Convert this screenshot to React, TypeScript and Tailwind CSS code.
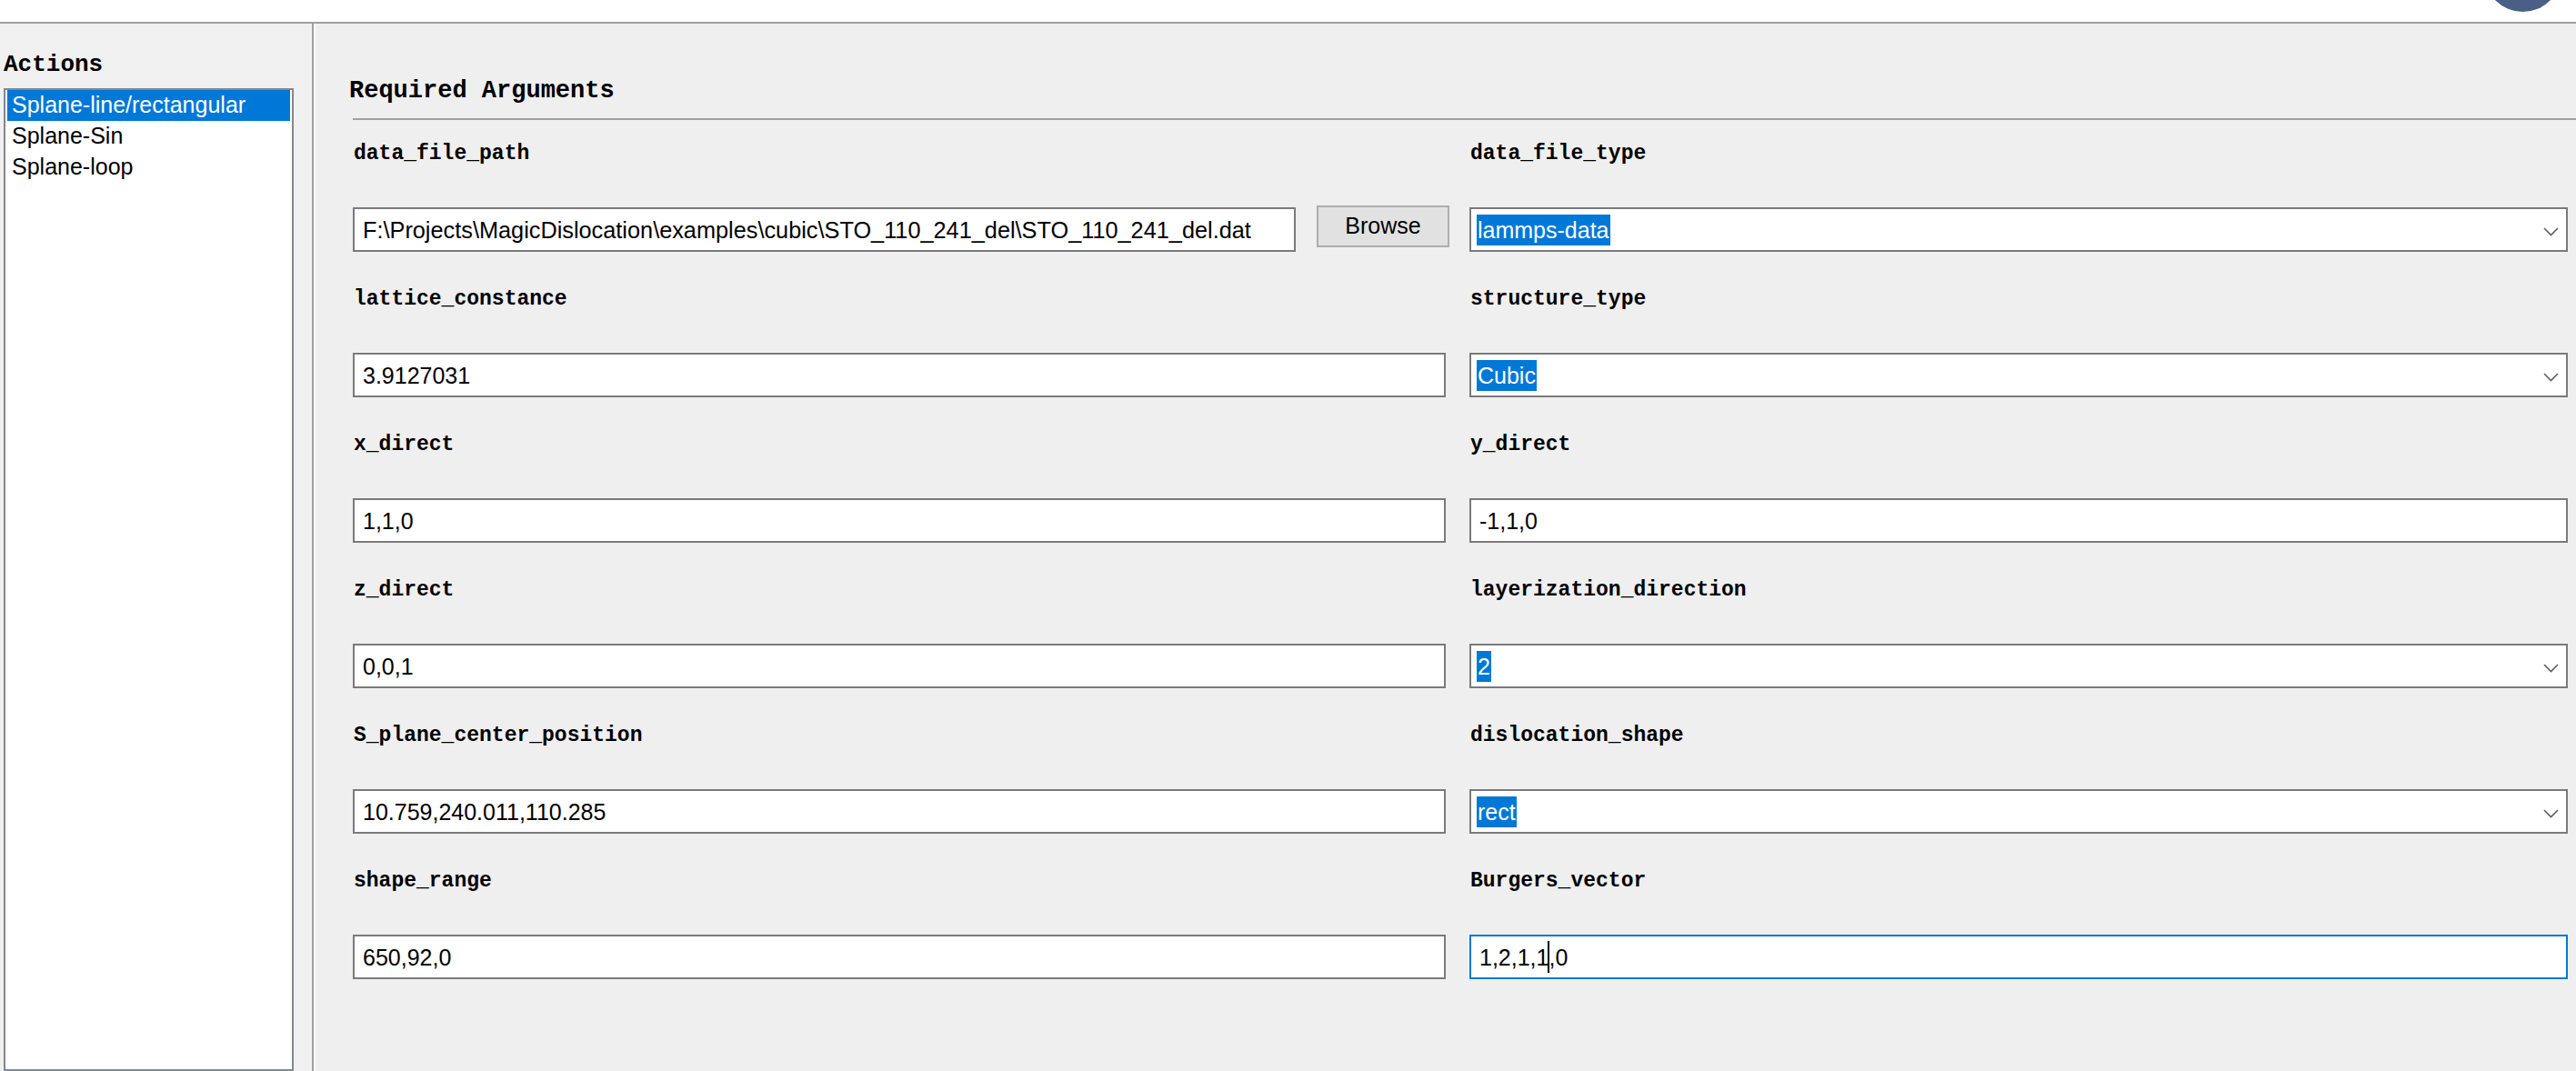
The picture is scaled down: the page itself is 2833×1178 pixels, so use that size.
import React from "react";

const mono = "font-['Liberation_Mono','Courier_New',monospace] font-bold text-black";
const sans = "font-['Liberation_Sans',Arial,sans-serif] text-black";

function Label({ text }: { text: string }) {
  return (
    <div className={`h-[60px] flex items-center pt-[10px] pl-[1px] text-[23px] leading-[30px] ${mono}`}>{text}</div>
  );
}

function TextBox({ value, className = "" }: { value: string; className?: string }) {
  return (
    <div
      className={`h-[49px] bg-white border-2 border-[#7a7a7a] flex items-center px-[9px] text-[25px] leading-[34px] whitespace-nowrap overflow-hidden ${sans} ${className}`}
    >
      {value}
    </div>
  );
}

function Combo({ value }: { value: string }) {
  return (
    <div className="h-[49px] bg-white border-2 border-[#7a7a7a] flex items-center pl-[6px] pr-[8px]">
      <span className={`bg-[#0078d7] !text-white text-[25px] leading-[34px] h-[34px] px-[1px] ${sans}`}>{value}</span>
      <div className="flex-1" />
      <svg width="17" height="10" viewBox="0 0 17 10" className="mt-[4px]">
        <polyline points="1,1 8.5,8.5 16,1" fill="none" stroke="#606060" strokeWidth="1.6" />
      </svg>
    </div>
  );
}

function Field({ label, children }: { label: string; children: React.ReactNode }) {
  return (
    <div className="flex flex-col">
      <Label text={label} />
      <div className="mt-[34px]">{children}</div>
    </div>
  );
}

export default function App() {
  return (
    <div className="w-[2833px] h-[1178px] overflow-hidden bg-[#f0f0f0] flex flex-col">
      <div className="h-[24px] bg-white relative overflow-hidden shrink-0">
        <div className="absolute left-[2732px] top-[-72px] w-[85px] h-[85px] rounded-full bg-[#4a5f85]" />
      </div>
      <div className="h-[2px] bg-[#a0a0a0] shrink-0" />
      <div className="flex flex-1 min-h-0">
        <aside className="w-[343px] shrink-0 flex flex-col pt-[30px] bg-[#f0f0f0]">
          <div className={`h-[30px] flex items-center pl-[4px] text-[26px] leading-[30px] ${mono}`}>Actions</div>
          <div className="mt-[11px] ml-[4px] w-[319px] h-[1100px] bg-white border-2 border-[#828790] px-[2px]">
            <div className={`h-[34px] bg-[#0078d7] flex items-center pl-[5px] text-[25px] !text-white ${sans}`}>
              Splane-line/rectangular
            </div>
            <div className={`h-[34px] flex items-center pl-[5px] text-[25px] ${sans}`}>Splane-Sin</div>
            <div className={`h-[34px] flex items-center pl-[5px] text-[25px] ${sans}`}>Splane-loop</div>
          </div>
        </aside>
        <div className="w-[2px] bg-[#a0a0a0] shrink-0" />
        <div className="w-[2px] bg-white shrink-0" />
        <main className="flex-1 flex flex-col pl-[41px] pr-[9px] bg-[#efefef]">
          <div className={`mt-[57px] h-[34px] -ml-[4px] flex items-center text-[27px] leading-[34px] ${mono}`}>
            Required Arguments
          </div>
          <div className="mt-[13px] h-[2px] bg-[#a0a0a0] -mr-[9px]" />
          <div className="pt-[2px] grid grid-cols-[1202px_1fr] gap-x-[26px] gap-y-[17px]">
            <Field label="data_file_path">
              <div className="flex items-start h-[49px]">
                <TextBox value="F:\Projects\MagicDislocation\examples\cubic\STO_110_241_del\STO_110_241_del.dat" className="w-[1037px] shrink-0 !text-[25.3px]" />
                <button
                  className={`ml-[23px] -mt-[2px] w-[146px] h-[46px] shrink-0 bg-[#e1e1e1] border-2 border-[#adadad] text-[25px] ${sans}`}
                >
                  Browse
                </button>
              </div>
            </Field>
            <Field label="data_file_type">
              <Combo value="lammps-data" />
            </Field>
            <Field label="lattice_constance">
              <TextBox value="3.9127031" />
            </Field>
            <Field label="structure_type">
              <Combo value="Cubic" />
            </Field>
            <Field label="x_direct">
              <TextBox value="1,1,0" />
            </Field>
            <Field label="y_direct">
              <TextBox value="-1,1,0" />
            </Field>
            <Field label="z_direct">
              <TextBox value="0,0,1" />
            </Field>
            <Field label="layerization_direction">
              <Combo value="2" />
            </Field>
            <Field label="S_plane_center_position">
              <TextBox value="10.759,240.011,110.285" />
            </Field>
            <Field label="dislocation_shape">
              <Combo value="rect" />
            </Field>
            <Field label="shape_range">
              <TextBox value="650,92,0" />
            </Field>
            <Field label="Burgers_vector">
              <div
                className={`h-[49px] bg-white border-2 border-[#0078d7] flex items-center px-[9px] text-[25px] leading-[34px] whitespace-nowrap ${sans}`}
              >
                <span>1,2,1,1</span>
                <span className="inline-block w-[2px] h-[35px] bg-black -mx-[1px] relative z-10" />
                <span>,0</span>
              </div>
            </Field>
          </div>
        </main>
      </div>
    </div>
  );
}
